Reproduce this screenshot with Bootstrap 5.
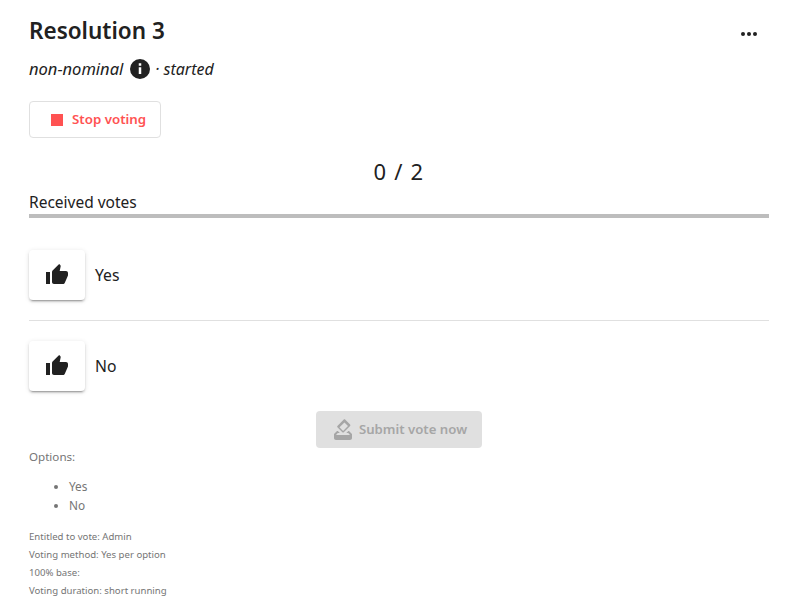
<!DOCTYPE html>
<html lang="en">
<head>
    <meta charset="UTF-8">
    <title>Resolution 3</title>
    <link rel="stylesheet" href="https://cdn.jsdelivr.net/npm/bootstrap@5.3.0/dist/css/bootstrap.min.css">
    <style>
        body { font-family: "Noto Sans", "Open Sans", sans-serif; color: #212121; background: #fff; overflow: hidden; }
        .poll-page { width: 740px; margin-left: 29px; padding-top: 11px; }
        .poll-title { font-size: 22.5px; line-height: 34px; font-weight: 600; margin: 3px 0 0; }
        .poll-menu { width: 40px; height: 40px; margin-right: -1px; margin-top: 3px; padding: 0; border: 0; background: none; }
        .poll-sub { font-size: 16px; line-height: 24px; font-style: italic; margin-top: 3px; gap: 7px; }
        .poll-sub .nominal { font-size: 16.5px; }
        .info-dot { width: 20px; height: 20px; display: block; margin-right: -2px; }
        .stop-btn { width: 132px; height: 37px; margin-top: 20px; padding: 0 0 0 21px; gap: 9px; background: #fff; border: 1px solid #e0e0e0; border-radius: 4px; color: #ff5252; font-size: 13.3px; font-weight: 600; }
        .stop-mark { width: 12px; height: 12px; background: #ff5252; }
        .vote-count { font-size: 22px; line-height: 30px; margin-top: 18px; letter-spacing: 1.2px; }
        .votes-head { font-size: 15.5px; line-height: 22px; margin-top: 5px; padding-bottom: 1px; border-bottom: 4px solid #bdbdbd; }
        .opt-row { height: 50px; gap: 10px; font-size: 15.7px; }
        .opt-row span { padding-top: 2px; }
        .opt-first { margin-top: 32px; }
        .thumb-btn { width: 56px; height: 50px; padding: 0; border: 0; background: #fff; border-radius: 4px; box-shadow: 0 3px 1px -2px rgba(0,0,0,.2), 0 2px 2px 0 rgba(0,0,0,.14), 0 1px 5px 0 rgba(0,0,0,.12); }
        .opt-sep { height: 1px; background: #e0e0e0; margin: 20px 0; }
        .submit-btn { width: 166px; height: 37px; margin-top: 20px; gap: 4px; background: #e0e0e0; color: #a6a6a6; border: 0; border-radius: 4px; font-size: 13.2px; font-weight: 600; padding: 0; }
        .poll-meta { color: #757575; }
        .opt-label { font-size: 11.6px; line-height: 18px; }
        .opt-list { font-size: 11.8px; line-height: 19px; padding-left: 40px; margin: 11px 0 13px; }
        .meta-line { font-size: 9.6px; line-height: 18px; }
    </style>
</head>
<body>

<div class="poll-page">
    <div class="d-flex justify-content-between align-items-start">
        <h1 class="poll-title">Resolution 3</h1>
        <button class="poll-menu d-flex align-items-center justify-content-center" aria-label="Menu">
            <svg width="18" height="4" viewBox="0 0 18 4"><circle cx="2" cy="2" r="2" fill="#212121"/><circle cx="8" cy="2" r="2" fill="#212121"/><circle cx="14" cy="2" r="2" fill="#212121"/></svg>
        </button>
    </div>
    <div class="poll-sub d-flex align-items-center">
        <span class="nominal">non-nominal</span>
        <svg class="info-dot" viewBox="0 0 24 24"><path fill="#212121" d="M12 0a12 12 0 1 0 0 24 12 12 0 0 0 0-24zm1.5 18h-3v-8h3zm0-10h-3V5h3z"/></svg>
        <span>· started</span>
    </div>
    <button class="stop-btn d-flex align-items-center"><span class="stop-mark"></span>Stop voting</button>

    <div class="vote-count text-center">0 / 2</div>
    <div class="votes-head">Received votes</div>

    <div class="opt-row opt-first d-flex align-items-center">
        <button class="thumb-btn d-flex align-items-center justify-content-center" aria-label="Yes">
            <svg width="24" height="24" viewBox="0 0 24 24"><path fill="#212121" d="M1 21h4V9H1v12zm22-11c0-1.1-.9-2-2-2h-6.31l.95-4.57.03-.32c0-.41-.17-.79-.44-1.06L14.17 1 7.59 7.59C7.22 7.95 7 8.45 7 9v10c0 1.1.9 2 2 2h9c.83 0 1.54-.5 1.84-1.22l3.02-7.05c.09-.23.14-.47.14-.73v-2z"/></svg>
        </button>
        <span>Yes</span>
    </div>
    <div class="opt-sep"></div>
    <div class="opt-row d-flex align-items-center">
        <button class="thumb-btn d-flex align-items-center justify-content-center" aria-label="No">
            <svg width="24" height="24" viewBox="0 0 24 24"><path fill="#212121" d="M1 21h4V9H1v12zm22-11c0-1.1-.9-2-2-2h-6.31l.95-4.57.03-.32c0-.41-.17-.79-.44-1.06L14.17 1 7.59 7.59C7.22 7.95 7 8.45 7 9v10c0 1.1.9 2 2 2h9c.83 0 1.54-.5 1.84-1.22l3.02-7.05c.09-.23.14-.47.14-.73v-2z"/></svg>
        </button>
        <span>No</span>
    </div>

    <div class="d-flex justify-content-center">
        <button class="submit-btn d-flex align-items-center justify-content-center" disabled>
            <svg width="24" height="24" viewBox="0 0 24 24"><path fill="#a6a6a6" d="M18 13h-.68l-2 2h1.91L19 17H5l1.78-2h2.05l-2-2H6l-3 3v4c0 1.1.89 2 1.99 2H19c1.1 0 2-.89 2-2v-4l-3-3zm-1-5.05l-4.95 4.95-3.54-3.54 4.95-4.95L17 7.95zm-4.24-6.36L6.39 7.96c-.39.39-.39 1.02 0 1.41l4.95 4.95c.39.39 1.02.39 1.41 0l6.36-6.36c.39-.39.39-1.02 0-1.41L14.16 1.6c-.38-.4-1.01-.4-1.4-.01z"/></svg>
            Submit vote now
        </button>
    </div>

    <div class="poll-meta">
        <div class="opt-label">Options:</div>
        <ul class="opt-list">
            <li>Yes</li>
            <li>No</li>
        </ul>
        <div class="meta-line">Entitled to vote: Admin</div>
        <div class="meta-line">Voting method: Yes per option</div>
        <div class="meta-line">100% base:</div>
        <div class="meta-line">Voting duration: short running</div>
    </div>
</div>

</body>
</html>
